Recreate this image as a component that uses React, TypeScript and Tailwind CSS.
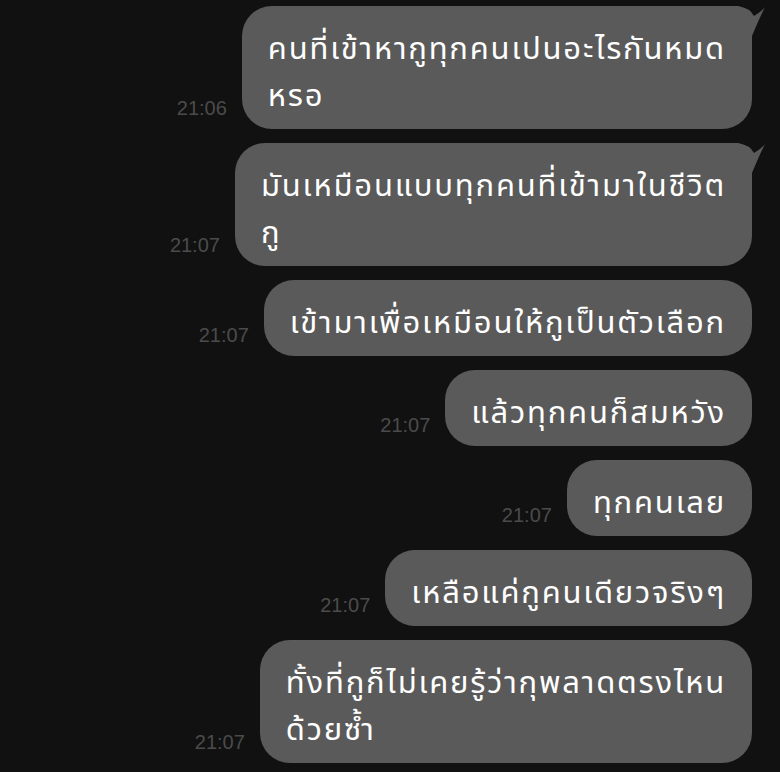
const messages = [
  { lines: ['คนที่เข้าหากูทุกคนเปนอะไรกันหมด', 'หรอ'], time: '21:06', tail: true },
  { lines: ['มันเหมือนแบบทุกคนที่เข้ามาในชีวิต', 'กู'], time: '21:07', tail: true },
  { lines: ['เข้ามาเพื่อเหมือนให้กูเป็นตัวเลือก'], time: '21:07' },
  { lines: ['แล้วทุกคนก็สมหวัง'], time: '21:07' },
  { lines: ['ทุกคนเลย'], time: '21:07' },
  { lines: ['เหลือแค่กูคนเดียวจริงๆ'], time: '21:07' },
  { lines: ['ทั้งที่กูก็ไม่เคยรู้ว่ากุพลาดตรงไหน', 'ด้วยซ้ำ'], time: '21:07' },
];

function Tail() {
  return (
    <svg
      className="absolute -right-[14px] top-0"
      width="44"
      height="60"
      viewBox="0 0 44 60"
    >
      <path d="M0 0 H16 Q28 2 32 10 Q39 6 43 1 Q37 13 30 30 V60 H0 Z" fill="#5a5a5a" />
    </svg>
  );
}

function Bubble({ lines, time, tail }: { lines: string[]; time: string; tail?: boolean }) {
  return (
    <div className="flex items-end gap-[15px]">
      <span className="mb-[11px] text-[20px] leading-none text-[#4b4b4b] [font-family:'Liberation_Sans',Arial,sans-serif]">
        {time}
      </span>
      <div className="relative rounded-[30px] bg-[#5a5a5a] px-[26px] pt-[20px] pb-[9px] text-[31px] leading-[47px] tracking-[1.8px] text-white whitespace-nowrap">
        {tail && <Tail />}
        <div className="relative">
          {lines.map((l, i) => (
            <div key={i}>{l}</div>
          ))}
        </div>
      </div>
    </div>
  );
}

export default function App() {
  return (
    <div className="flex h-[772px] w-[780px] flex-col items-end gap-[14px] overflow-hidden bg-[#111111] pr-[28px] pt-[6px] [font-family:'Noto_Sans_Thai','Noto_Sans','DejaVu_Sans',sans-serif]">
      {messages.map((m, i) => (
        <Bubble key={i} {...m} />
      ))}
    </div>
  );
}
